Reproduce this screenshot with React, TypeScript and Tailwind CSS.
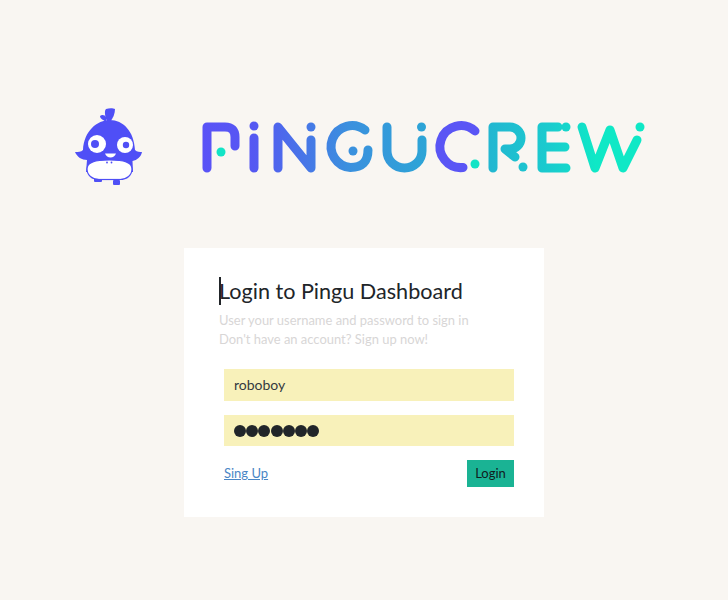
const Logo = () => (
  <svg width="728" height="110" viewBox="0 100 728 110" className="block" role="img" aria-label="Pingu Crew">
    <defs>
      <linearGradient id="word" gradientUnits="userSpaceOnUse" x1="200" y1="0" x2="650" y2="0">
        <stop offset="0" stopColor="#5a52f7" />
        <stop offset="0.12" stopColor="#5558f2" />
        <stop offset="0.33" stopColor="#3b90de" />
        <stop offset="0.6" stopColor="#25b0d2" />
        <stop offset="0.78" stopColor="#1accce" />
        <stop offset="0.88" stopColor="#0fe8c6" />
        <stop offset="1" stopColor="#0fe8c6" />
      </linearGradient>
    </defs>

    {/* penguin */}
    <g fill="#4f4ff6">
      <path d="M107 122 C105 116 104 111 106 109 C109 108 113 108 115 109 C115 114 113 118 110 122 Z" />
      <path d="M106 122 C104 120 100 119 100 116 C102 114 105 115 106 117 Z" />
      <path d="M110 120 C123 120 134 131 135 150 C137 152 140 152 142 152 C141 157 137 160 132.5 161 L133 172 L86 172 L87 160 C82 160 77 157 75 152 C78 152 81 152 83 150 C84 131 97 120 110 120 Z" />
      <rect x="94" y="177" width="8" height="5" rx="1" />
      <rect x="113" y="180" width="7" height="5" rx="1" />
    </g>
    <path d="M87 169 C87 162 95 160 109.5 160 C124 160 132 162 132 169 C132 175 127 179.5 120 179.5 H99 C92 179.5 87 175 87 169 Z" fill="#fff" stroke="#4f4ff6" strokeWidth="1.2" />
    <path d="M96 179.5 H120" stroke="#4f4ff6" strokeWidth="1.2" />
    <circle cx="107" cy="162.5" r="0.9" fill="#4f4ff6" />
    <circle cx="111.5" cy="162.5" r="0.9" fill="#4f4ff6" />
    <circle cx="97" cy="144" r="9" fill="#fff" />
    <circle cx="95" cy="144" r="4" fill="#4f4ff6" />
    <circle cx="125" cy="145" r="8" fill="#fff" />
    <circle cx="126" cy="145" r="3.2" fill="#4f4ff6" />
    <path d="M105 153.5 H116 C115 156 113 157.5 110.5 157.5 C108 157.5 106 156 105 153.5 Z" fill="#fff" />

    {/* wordmark */}
    <g fill="none" stroke="url(#word)" strokeWidth="9" strokeLinecap="round" strokeLinejoin="round">
      <path d="M207 168 V127 H225 Q235 127 235 137 V146" />
      <path d="M254 138 V168" />
      <path d="M278 168 V127 L311 168 V140" />
      <path d="M365 130 A21 21 0 1 0 350.5 167.5 Q368 167.5 368 150" />
      <path d="M387 127 V151 A17.5 17 0 0 0 422 151 V140" />
      <path d="M475 131 A21 21 0 1 0 463 167.5" stroke="#5a55f5" />
      <path d="M493 168 V127 H510 A11 11 0 0 1 510 149 H505 L515 157" />
      <path d="M558 127 H542 V168 H566 M542 147 H565" />
      <path d="M582 127 L595 168 L610 130 L623 168 L637 140" />
    </g>
    <g fill="url(#word)">
      <circle cx="254" cy="126" r="4.5" />
      <circle cx="311" cy="127" r="4.5" />
      <circle cx="353" cy="151" r="4.5" />
      <circle cx="421.5" cy="127" r="4.5" />
      <circle cx="523" cy="167" r="4.5" />
      <circle cx="566" cy="127" r="4.5" />
      <circle cx="640" cy="127" r="4.5" />
    </g>
    <g fill="#12e4c6">
      <circle cx="221" cy="152" r="4.5" />
      <circle cx="475" cy="164" r="4.5" />
    </g>
  </svg>
);

export default function App() {
  return (
    <div className="min-h-[600px] bg-[#f9f6f2] pt-[100px] font-['Lato',sans-serif] text-[#212529]">
      <Logo />
      <div className="mx-auto mt-[38px] h-[269px] w-[360px] bg-white px-[35px] pt-[29px]">
        <h1 className="relative h-[28px] text-[21.6px] leading-[28px]">
          <span className="absolute left-0 top-0 h-[28px] w-[2px] bg-[#212529]" />
          Login to Pingu Dashboard
        </h1>
        <p className="mt-[6px] text-[12.95px] leading-[19px] text-[#d8d6d6]">
          User your username and password to sign in
          <br />
          Don't have an account? Sign up now!
        </p>
        <div className="ml-[5px] mt-[20px] w-[290px]">
          <div className="flex h-[32px] items-center bg-[#f8f1ba] px-[10px] pb-[2px] text-[14px] text-[#343a40]">roboboy</div>
          <div className="mt-[14px] flex h-[31px] items-center gap-[0.2px] bg-[#f8f1ba] px-[10px]">
            {[0, 1, 2, 3, 4, 5, 6].map((i) => (
              <span key={i} className="h-[12px] w-[12px] rounded-full bg-[#212529]" />
            ))}
          </div>
          <div className="mt-[14px] flex items-center justify-between">
            <a href="#" className="pt-[1px] text-[13px] text-[#4a86c5] underline">Sing Up</a>
            <button className="h-[27px] w-[47px] bg-[#1ab394] text-[13px] text-[#10201f]">Login</button>
          </div>
        </div>
      </div>
    </div>
  );
}
